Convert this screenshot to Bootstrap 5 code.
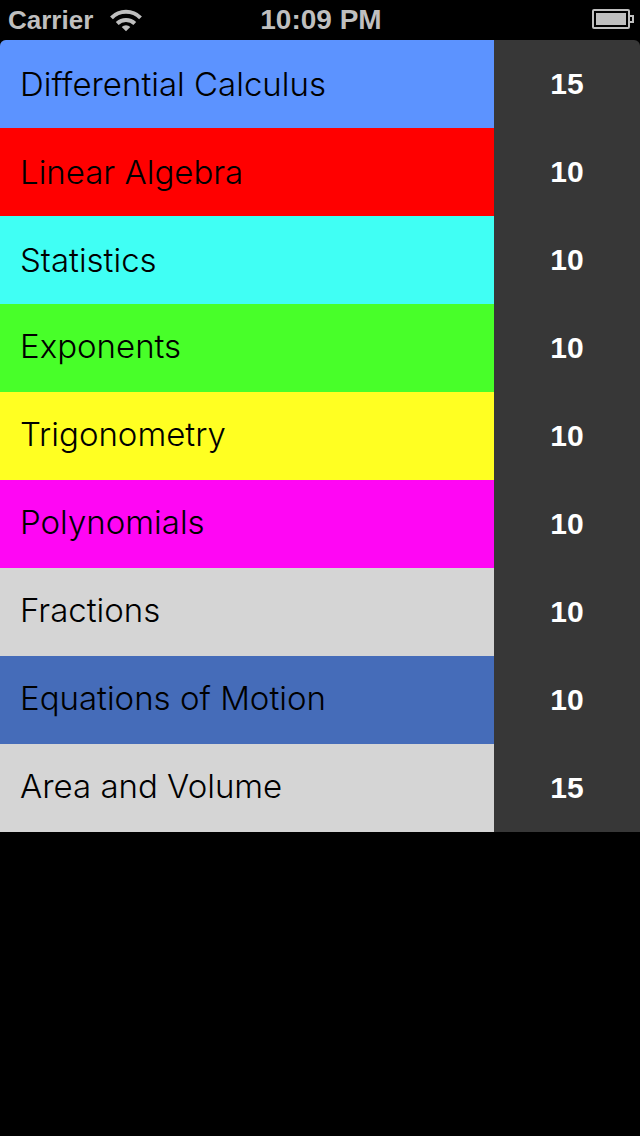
<!DOCTYPE html>
<html lang="en">
<head>
<meta charset="utf-8">
<meta name="viewport" content="width=device-width, initial-scale=1">
<title>Topics</title>
<link rel="stylesheet" href="https://cdn.jsdelivr.net/npm/bootstrap@5.3.0/dist/css/bootstrap.min.css">
<style>
  body { background: #000; font-family: "Liberation Sans", Arial, sans-serif; }
  .status-bar { height: 40px; color: #bfbfbf; font-weight: 700; line-height: 40px; padding: 0 6px 0 8px; }
  .status-side { flex: 1 1 0; font-size: 26px; }
  .status-time { font-size: 28px; }
  .topics { border-radius: 6px 6px 0 0; overflow: hidden; }
  .topic { height: 88px; color: #000; background: #373737; }
  .topic-name { background: var(--tint); padding: 0 20px; font-family: Inter, sans-serif; font-weight: 300; font-size: 33px; line-height: 84px; }
  .topic-low .topic-name { line-height: 88px; }
  .topic-count { width: 146px; color: #fff; font-weight: 700; font-size: 30px; line-height: 88px; }
  .tint-sky { --tint: #5c93ff; }
  .tint-red { --tint: #f00; }
  .tint-aqua { --tint: #40fff4; }
  .tint-green { --tint: #48ff29; }
  .tint-yellow { --tint: #ffff22; }
  .tint-magenta { --tint: #ff06f4; }
  .tint-silver { --tint: #d5d5d5; }
  .tint-blue { --tint: #456cb9; }
</style>
</head>
<body>
<header class="status-bar d-flex align-items-center">
  <div class="status-side d-flex align-items-center">
    <span class="me-3">Carrier</span>
    <svg width="34" height="24" viewBox="-1 0 34 24" fill="none" stroke="#bfbfbf" stroke-width="4" role="img" aria-label="Wi-Fi">
      <path d="M1.5 9.8a20.5 20.5 0 0 1 29 0"/>
      <path d="M7.2 15.500a12.500 12.500 0 0 1 17.600 0"/>
      <path d="M16 23.300l-4.300-4.300a6.100 6.100 0 0 1 8.600 0z" fill="#bfbfbf" stroke="none"/>
    </svg>
  </div>
  <time class="status-time">10:09 PM</time>
  <div class="status-side d-flex justify-content-end">
    <svg width="42" height="22" viewBox="0 0 42 22" fill="none" stroke="#bfbfbf" stroke-width="2" role="img" aria-label="Battery full">
      <rect x="1" y="1" width="36" height="18" rx="1"/>
      <rect x="4" y="4" width="30" height="12" fill="#bfbfbf" stroke="none"/>
      <path d="M38 7h3v6h-3"/>
    </svg>
  </div>
</header>
<main>
  <ul class="topics list-unstyled mb-0">
    <li class="topic topic-low tint-sky d-flex"><span class="topic-name flex-grow-1">Differential Calculus</span><span class="topic-count text-center">15</span></li>
    <li class="topic topic-low tint-red d-flex"><span class="topic-name flex-grow-1">Linear Algebra</span><span class="topic-count text-center">10</span></li>
    <li class="topic topic-low tint-aqua d-flex"><span class="topic-name flex-grow-1">Statistics</span><span class="topic-count text-center">10</span></li>
    <li class="topic tint-green d-flex"><span class="topic-name flex-grow-1">Exponents</span><span class="topic-count text-center">10</span></li>
    <li class="topic tint-yellow d-flex"><span class="topic-name flex-grow-1">Trigonometry</span><span class="topic-count text-center">10</span></li>
    <li class="topic tint-magenta d-flex"><span class="topic-name flex-grow-1">Polynomials</span><span class="topic-count text-center">10</span></li>
    <li class="topic tint-silver d-flex"><span class="topic-name flex-grow-1">Fractions</span><span class="topic-count text-center">10</span></li>
    <li class="topic tint-blue d-flex"><span class="topic-name flex-grow-1">Equations of Motion</span><span class="topic-count text-center">10</span></li>
    <li class="topic tint-silver d-flex"><span class="topic-name flex-grow-1">Area and Volume</span><span class="topic-count text-center">15</span></li>
  </ul>
</main>
<script src="https://cdn.jsdelivr.net/npm/bootstrap@5.3.0/dist/js/bootstrap.bundle.min.js"></script>
</body>
</html>
